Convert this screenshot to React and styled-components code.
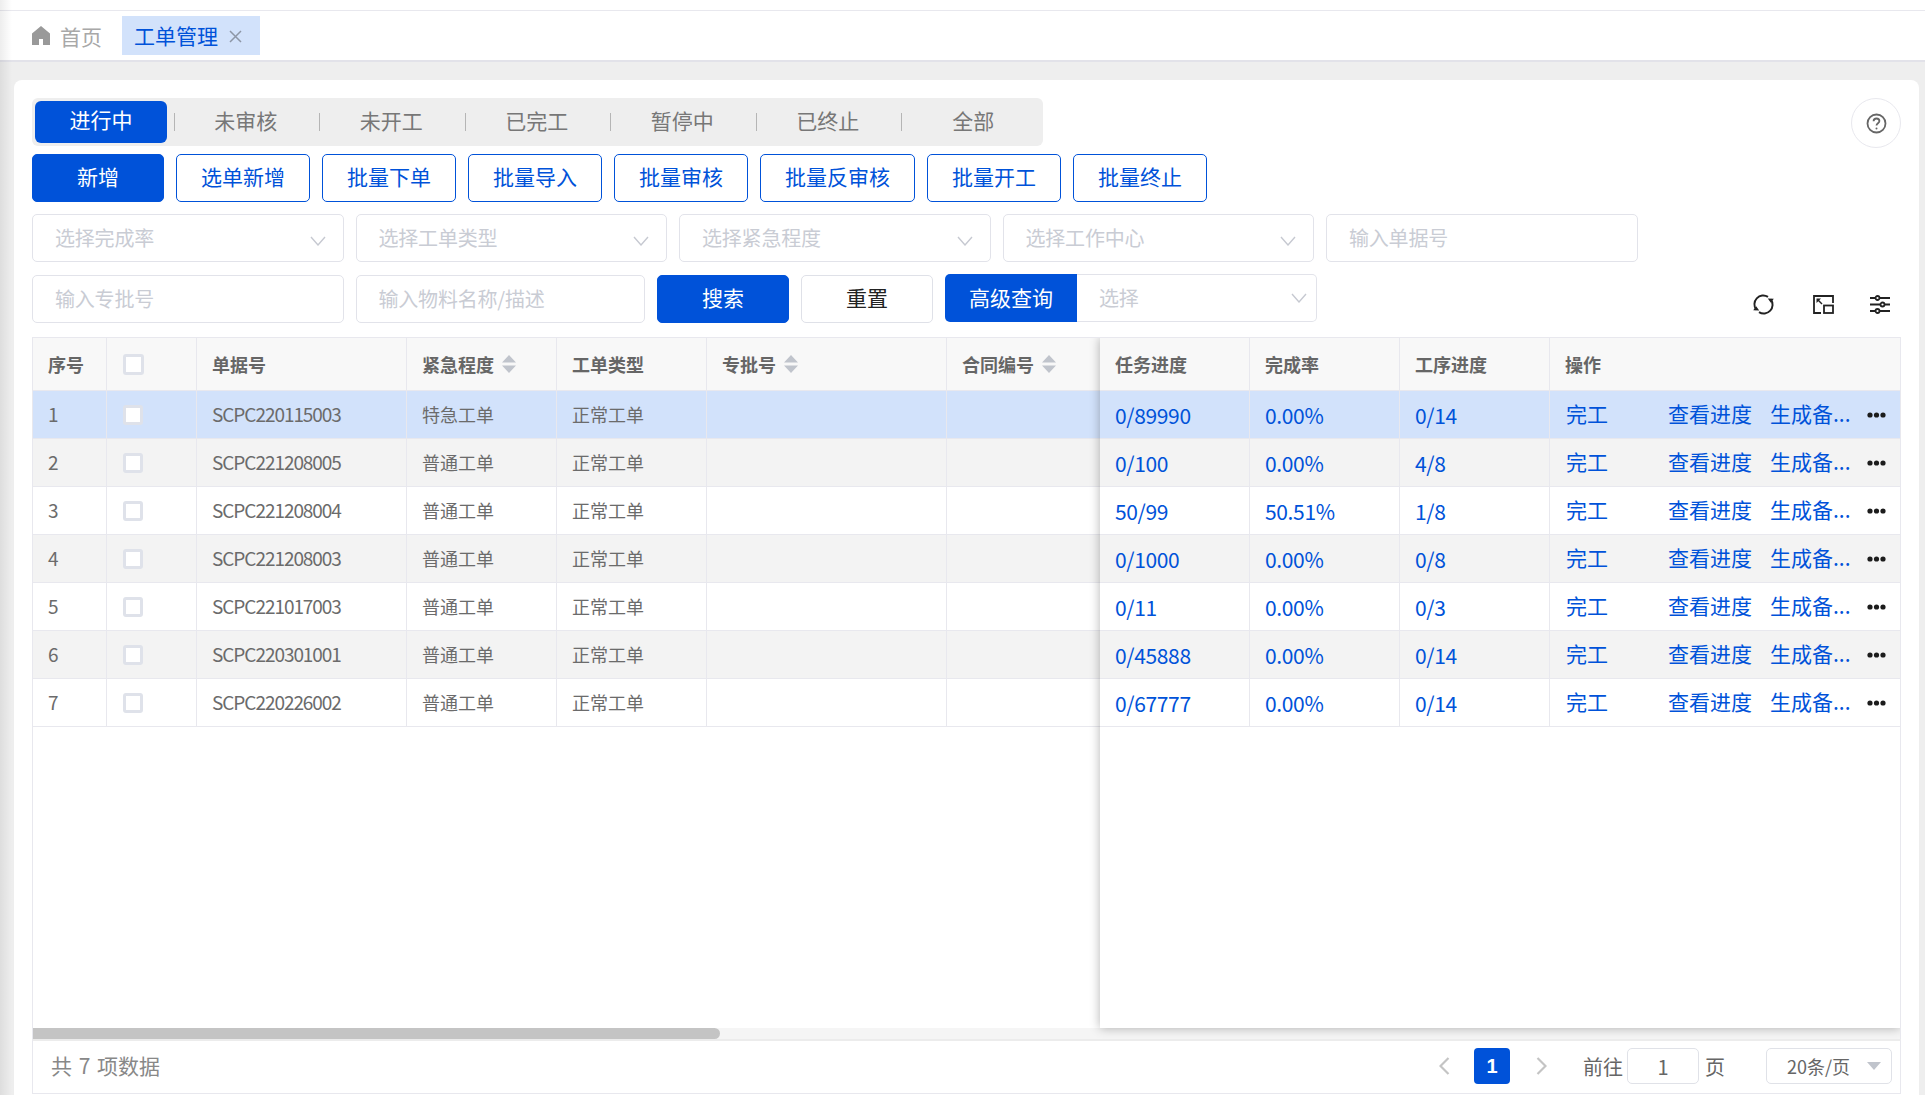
import React from 'react';
import styled, { createGlobalStyle } from 'styled-components';

const BLUE = '#0052d9';
const LINE = '#e8e8ee';
const FONT = '"Noto Sans CJK SC", "Noto Sans", sans-serif';

const GlobalStyle = createGlobalStyle`
  html, body { margin: 0; padding: 0; background: #eeeeee; }
  * { box-sizing: border-box; }
  body { font-family: ${FONT}; overflow: hidden; }
`;

const Page = styled.div`
  position: relative;
  width: 1925px;
  height: 1095px;
  overflow: hidden;
  display: flex;
  flex-direction: column;
  background: #eeeeee;

  /* shadow of the collapsed side menu */
  &::after {
    content: '';
    position: absolute;
    top: 0;
    bottom: 0;
    left: 0;
    width: 12px;
    pointer-events: none;
    background: linear-gradient(to right, rgba(0, 0, 0, 0.07), rgba(0, 0, 0, 0));
  }
`;

const TopStrip = styled.div`
  height: 11px;
  flex: none;
  background: #fff;
  border-bottom: 1px solid ${LINE};
`;

const TagBar = styled.div`
  height: 51px;
  flex: none;
  display: flex;
  align-items: center;
  padding: 0 0 0 32px;
  background: #fff;
  border-bottom: 2px solid #e2e2e9;
`;

const HomeTag = styled.div`
  display: flex;
  align-items: center;
  gap: 10px;
  width: 90px;
  font-size: 21px;
  color: #a8a8a8;
`;

const ActiveTag = styled.div`
  display: flex;
  align-items: center;
  height: 39px;
  width: 138px;
  padding: 0 0 2px 12px;
  background: #d2e2fb;
  color: ${BLUE};
  font-size: 21px;
  svg { margin: 3px 0 0 11px; }
`;

const Main = styled.div`
  flex: 1;
  min-height: 0;
  padding: 18px 6px 0 14px;
`;

const Card = styled.div`
  height: 1040px;
  padding: 18px 18px 0;
  background: #fff;
  border-radius: 8px;
`;

const StatusRow = styled.div`
  display: flex;
  justify-content: space-between;
  align-items: flex-start;
  height: 48px;
`;

const Segment = styled.div`
  display: flex;
  align-items: center;
  width: 1011px;
  height: 48px;
  padding: 0 3px;
  background: #eeeeee;
  border-radius: 6px;
`;

const SegmentActive = styled.div`
  width: 132px;
  height: 42px;
  flex: none;
  line-height: 37px;
  text-align: center;
  font-size: 21px;
  color: #fff;
  background: ${BLUE};
  border-radius: 6px;
  margin-right: 6.5px;
`;

const SegmentItem = styled.div`
  width: 145.5px;
  height: 18px;
  flex: none;
  padding-right: 2px;
  line-height: 15px;
  text-align: center;
  font-size: 21px;
  color: #777;
  border-left: 1.5px solid #b5b5b5;
`;

const HelpButton = styled.div`
  width: 50px;
  height: 50px;
  display: flex;
  align-items: center;
  justify-content: center;
  border: 1px solid ${LINE};
  border-radius: 50%;
`;

const ButtonRow = styled.div`
  display: flex;
  gap: 12px;
  margin-top: 8px;
`;

const Button = styled.div`
  display: flex;
  align-items: center;
  justify-content: center;
  width: ${(p) => p.$w || 134}px;
  height: 48px;
  flex: none;
  padding-bottom: 4px;
  border-radius: 5px;
  font-size: 21px;
  border: 1px solid ${(p) => (p.$plain ? '#dfe1e8' : BLUE)};
  background: ${(p) => (p.$solid ? BLUE : '#fff')};
  color: ${(p) => (p.$solid ? '#fff' : p.$plain ? '#222' : BLUE)};
`;

const FilterRow = styled.div`
  display: flex;
  align-items: stretch;
  gap: 12px;
  margin-top: ${(p) => p.$top || 12}px;
`;

const Field = styled.div`
  display: flex;
  align-items: center;
  justify-content: space-between;
  width: ${(p) => p.$w}px;
  height: 48px;
  flex: none;
  padding: 0 17px 2px 22px;
  border: 1px solid #e2e3ea;
  border-radius: 5px;
  background: #fff;
  font-size: 20px;
  letter-spacing: -0.2px;
  color: #c9ccd4;
  svg { margin-top: 8px; }
`;

const AdvancedGroup = styled.div`
  display: flex;
  margin-top: -1px;
`;

const AdvancedButton = styled.div`
  display: flex;
  align-items: center;
  justify-content: center;
  width: 132px;
  height: 48px;
  padding-bottom: 2px;
  background: ${BLUE};
  color: #fff;
  font-size: 21px;
  border-radius: 5px 0 0 5px;
`;

const AdvancedSelect = styled(Field)`
  width: 240px;
  border-left: none;
  border-radius: 0 5px 5px 0;
  padding: 0 9px 2px 22px;
  svg { margin-top: 2px; }
`;

const ToolIcons = styled.div`
  display: flex;
  align-items: center;
  margin-left: auto;
  padding-right: 11px;
  gap: 36px;
  height: 38px;
  margin-top: 10px;
  svg:first-child { margin-right: 3px; }
`;

const TableBox = styled.div`
  margin-top: 14px;
  border-left: 1px solid ${LINE};
  border-right: 1px solid ${LINE};
  border-top: 1px solid ${LINE};
`;

const Panes = styled.div`
  position: relative;
  display: flex;
  height: 690px;
`;

const Pane = styled.div`
  width: ${(p) => p.$w}px;
  flex: none;
`;

const FixedPane = styled(Pane)`
  position: relative;
  z-index: 2;
  background: #fff;
  box-shadow: 0 0 10px rgba(0, 0, 0, 0.3);
  clip-path: inset(0 0 -12px -12px);
`;

const Row = styled.div`
  display: flex;
  height: ${(p) => (p.$head ? 53 : 48)}px;
  border-bottom: 1px solid ${LINE};
  background: ${(p) => (p.$head ? '#f8f8f8' : p.$selected ? '#d2e2fb' : p.$even ? '#f3f3f3' : '#fff')};
`;

const Cell = styled.div`
  display: flex;
  align-items: center;
  width: ${(p) => p.$w}px;
  flex: ${(p) => (p.$w ? 'none' : 1)};
  min-width: 0;
  padding: 0 15px;
  border-right: ${(p) => (p.$last ? 'none' : `1px solid ${LINE}`)};
  font-size: 18px;
  color: #6b6b6b;
`;

const TextCell = styled(Cell)`
  padding-bottom: 2px;
`;

const CodeCell = styled(TextCell)`
  font-size: 19px;
  letter-spacing: -1.05px;
`;

const HeadCell = styled(Cell)`
  font-weight: 700;
  color: #666;
  gap: 8px;
`;

const CheckCell = styled(Cell)`
  padding: 0 0 0 16px;
`;

const Checkbox = styled.div`
  width: ${(p) => (p.$big ? 21 : 20)}px;
  height: ${(p) => (p.$big ? 21 : 20)}px;
  background: #fff;
  border: 3px solid #dfe2ea;
  border-radius: 3px;
`;

const NumCell = styled(Cell)`
  font-size: 21px;
  color: ${BLUE};
  letter-spacing: -0.35px;
  padding-top: 1px;
`;

const ActionCell = styled(Cell)`
  display: grid;
  grid-template-columns: 102px 102px 97px 20px;
  padding: 0 0 0 16px;
  font-size: 21px;
  color: ${BLUE};
`;

const ActionText = styled.span`
  display: block;
  margin-top: -4px;
  white-space: nowrap;
`;

const ScrollTrack = styled.div`
  height: 11px;
  background: #f5f5f5;
`;

const ScrollThumb = styled.div`
  width: 687px;
  height: 11px;
  background: #c4c4c4;
  border-radius: 0 6px 6px 0;
`;

const Footer = styled.div`
  display: flex;
  align-items: center;
  height: 55px;
  padding: 0 8px 2px 18px;
  border: 1px solid ${LINE};
  border-top: 2px solid #ececec;
  font-size: 21px;
  word-spacing: 2px;
  color: #888;
`;

const FooterText = styled.span`
  margin-top: -2px;
`;

const Pager = styled.div`
  display: flex;
  align-items: center;
  margin-left: auto;
  font-size: 20px;
  color: #666;
`;

const PageNumber = styled.div`
  display: flex;
  align-items: center;
  justify-content: center;
  width: 36px;
  height: 36px;
  margin: 0 26px 0 24px;
  background: ${BLUE};
  border-radius: 4px;
  color: #fff;
  font-family: "Liberation Sans", sans-serif;
  font-weight: 700;
  font-size: 20px;
`;

const PageLabel = styled.span`
  margin-left: 36px;
  margin-right: 4px;
`;

const PageInput = styled.div`
  display: flex;
  align-items: center;
  justify-content: center;
  width: 72px;
  height: 36px;
  margin-right: 6px;
  border: 1px solid #e0e2e8;
  border-radius: 5px;
  font-size: 20px;
  color: #666;
`;

const SizeSelect = styled.div`
  display: flex;
  align-items: center;
  justify-content: space-between;
  width: 126px;
  height: 36px;
  margin-left: 41px;
  padding: 0 10px 0 20px;
  border: 1px solid #e0e2e8;
  border-radius: 5px;
  font-size: 18px;
  color: #666;
`;

const Chevron = () => (
  <svg width="16" height="10" viewBox="0 0 16 10" fill="none" stroke="#c6c9d1" strokeWidth="1.4">
    <path d="M1 1l7 8 7-8" />
  </svg>
);

const HomeIcon = () => (
  <svg width="18" height="19" viewBox="0 0 18 19" fill="#999">
    <path d="M9 0L18 7.5V19H11V13H7V19H0V7.5Z" />
  </svg>
);

const CloseIcon = () => (
  <svg width="13" height="13" viewBox="0 0 13 13" stroke="#8d96a6" strokeWidth="1.5">
    <path d="M1 1l11 11M12 1L1 12" />
  </svg>
);

const HelpIcon = () => (
  <svg width="21" height="21" viewBox="0 0 21 21" fill="none" stroke="#666" strokeWidth="1.8">
    <circle cx="10.5" cy="10.5" r="9" />
    <path d="M7.6 8.2c0-1.6 1.3-2.7 2.9-2.7s2.9 1.1 2.9 2.6c0 2.2-2.9 2.2-2.9 4.5" />
    <circle cx="10.5" cy="15.4" r="1" fill="#666" stroke="none" />
  </svg>
);

const RefreshIcon = () => (
  <svg width="21" height="21" viewBox="0 0 21 21" fill="none" stroke="#222" strokeWidth="1.9">
    <path d="M3.2 15.6A8.8 8.8 0 0 1 15 2.9" />
    <path d="M17.8 5.4A8.8 8.8 0 0 1 6 18.1" />
    <path d="M17.8 8.8l3-4-6-.2zM3.2 12.2l-3 4 6 .2z" fill="#222" stroke="none" />
  </svg>
);

const ShrinkIcon = () => (
  <svg width="21" height="19" viewBox="0 0 21 19" fill="none" stroke="#222" strokeWidth="1.8">
    <path d="M8 18H1V1h19v7" />
    <rect x="11" y="10.5" width="9" height="7.5" />
    <path d="M4.5 4.5L9 9" strokeWidth="1.4" />
    <path d="M3.5 3.5H8L3.5 8z" fill="#222" stroke="none" />
  </svg>
);

const SlidersIcon = () => (
  <svg width="20" height="19" viewBox="0 0 20 19" fill="none" stroke="#222" strokeWidth="1.8">
    <path d="M0 3h5.5M9.5 3H20M0 9.5h10.5M14.5 9.5H20M0 16h5.5M9.5 16H20" />
    <circle cx="7.5" cy="3" r="2" />
    <circle cx="12.5" cy="9.5" r="2" />
    <circle cx="7.5" cy="16" r="2" />
  </svg>
);

const SortIcon = () => (
  <svg width="14" height="18" viewBox="0 0 14 18" fill="#c0c4cc">
    <path d="M7 0l7 7.5H0zM0 10.5h14L7 18z" />
  </svg>
);

const DotsIcon = () => (
  <svg width="19" height="6" viewBox="0 0 19 6" fill="#1c1c1c">
    <circle cx="3" cy="3" r="2.6" />
    <circle cx="9.5" cy="3" r="2.6" />
    <circle cx="16" cy="3" r="2.6" />
  </svg>
);

const PagerArrow = ({ right }) => (
  <svg width="11" height="18" viewBox="0 0 11 18" fill="none" stroke="#c4c4c4" strokeWidth="2.2">
    <path d={right ? 'M1.5 1l8 8-8 8' : 'M9.5 1l-8 8 8 8'} />
  </svg>
);

const Caret = () => (
  <svg width="14" height="8" viewBox="0 0 14 8" fill="#c0c4cc">
    <path d="M0 0h14L7 8z" />
  </svg>
);

const tabs = ['未审核', '未开工', '已完工', '暂停中', '已终止', '全部'];

const buttons = [
  ['选单新增', 134],
  ['批量下单', 134],
  ['批量导入', 134],
  ['批量审核', 134],
  ['批量反审核', 155],
  ['批量开工', 134],
  ['批量终止', 134],
];

const selects = ['选择完成率', '选择工单类型', '选择紧急程度', '选择工作中心'];

const rows = [
  ['SCPC220115003', '特急工单', '0/89990', '0.00%', '0/14'],
  ['SCPC221208005', '普通工单', '0/100', '0.00%', '4/8'],
  ['SCPC221208004', '普通工单', '50/99', '50.51%', '1/8'],
  ['SCPC221208003', '普通工单', '0/1000', '0.00%', '0/8'],
  ['SCPC221017003', '普通工单', '0/11', '0.00%', '0/3'],
  ['SCPC220301001', '普通工单', '0/45888', '0.00%', '0/14'],
  ['SCPC220226002', '普通工单', '0/67777', '0.00%', '0/14'],
];

export default function App() {
  return (
    <Page>
      <GlobalStyle />
      <TopStrip />
      <TagBar>
        <HomeTag>
          <HomeIcon />
          首页
        </HomeTag>
        <ActiveTag>
          工单管理
          <CloseIcon />
        </ActiveTag>
      </TagBar>
      <Main>
        <Card>
          <StatusRow>
            <Segment>
              <SegmentActive>进行中</SegmentActive>
              {tabs.map((t) => (
                <SegmentItem key={t}>{t}</SegmentItem>
              ))}
            </Segment>
            <HelpButton>
              <HelpIcon />
            </HelpButton>
          </StatusRow>

          <ButtonRow>
            <Button $solid $w={132}>新增</Button>
            {buttons.map(([label, w]) => (
              <Button key={label} $w={w}>{label}</Button>
            ))}
          </ButtonRow>

          <FilterRow>
            {selects.map((s) => (
              <Field key={s} $w={311.5}>
                {s}
                <Chevron />
              </Field>
            ))}
            <Field $w={311.5}>输入单据号</Field>
          </FilterRow>

          <FilterRow $top={13}>
            <Field $w={311.5}>输入专批号</Field>
            <Field $w={289.5}>输入物料名称/描述</Field>
            <Button $solid $w={132}>搜索</Button>
            <Button $plain $w={132}>重置</Button>
            <AdvancedGroup>
              <AdvancedButton>高级查询</AdvancedButton>
              <AdvancedSelect $w={240}>
                选择
                <Chevron />
              </AdvancedSelect>
            </AdvancedGroup>
            <ToolIcons>
              <RefreshIcon />
              <ShrinkIcon />
              <SlidersIcon />
            </ToolIcons>
          </FilterRow>

          <TableBox>
            <Panes>
              <Pane $w={1067}>
                <Row $head>
                  <HeadCell $w={74}>序号</HeadCell>
                  <CheckCell $w={90}><Checkbox $big /></CheckCell>
                  <HeadCell $w={210}>单据号</HeadCell>
                  <HeadCell $w={150}>紧急程度<SortIcon /></HeadCell>
                  <HeadCell $w={150}>工单类型</HeadCell>
                  <HeadCell $w={240}>专批号<SortIcon /></HeadCell>
                  <HeadCell $w={153} $last>合同编号<SortIcon /></HeadCell>
                </Row>
                {rows.map((r, i) => (
                  <Row key={r[0]} $selected={i === 0} $even={i % 2 === 1}>
                    <CodeCell $w={74}>{i + 1}</CodeCell>
                    <CheckCell $w={90}><Checkbox /></CheckCell>
                    <CodeCell $w={210}>{r[0]}</CodeCell>
                    <TextCell $w={150}>{r[1]}</TextCell>
                    <TextCell $w={150}>正常工单</TextCell>
                    <Cell $w={240} />
                    <Cell $w={153} $last />
                  </Row>
                ))}
              </Pane>
              <FixedPane $w={800}>
                <Row $head>
                  <HeadCell $w={150}>任务进度</HeadCell>
                  <HeadCell $w={150}>完成率</HeadCell>
                  <HeadCell $w={150}>工序进度</HeadCell>
                  <HeadCell $last>操作</HeadCell>
                </Row>
                {rows.map((r, i) => (
                  <Row key={r[0]} $selected={i === 0} $even={i % 2 === 1}>
                    <NumCell $w={150}>{r[2]}</NumCell>
                    <NumCell $w={150}>{r[3]}</NumCell>
                    <NumCell $w={150}>{r[4]}</NumCell>
                    <ActionCell $last>
                      <ActionText>完工</ActionText>
                      <ActionText>查看进度</ActionText>
                      <ActionText>生成备...</ActionText>
                      <DotsIcon />
                    </ActionCell>
                  </Row>
                ))}
              </FixedPane>
            </Panes>
            <ScrollTrack>
              <ScrollThumb />
            </ScrollTrack>
          </TableBox>

          <Footer>
            <FooterText>共 7 项数据</FooterText>
            <Pager>
              <PagerArrow />
              <PageNumber>1</PageNumber>
              <PagerArrow right />
              <PageLabel>前往</PageLabel>
              <PageInput>1</PageInput>
              页
              <SizeSelect>
                20条/页
                <Caret />
              </SizeSelect>
            </Pager>
          </Footer>
        </Card>
      </Main>
    </Page>
  );
}
